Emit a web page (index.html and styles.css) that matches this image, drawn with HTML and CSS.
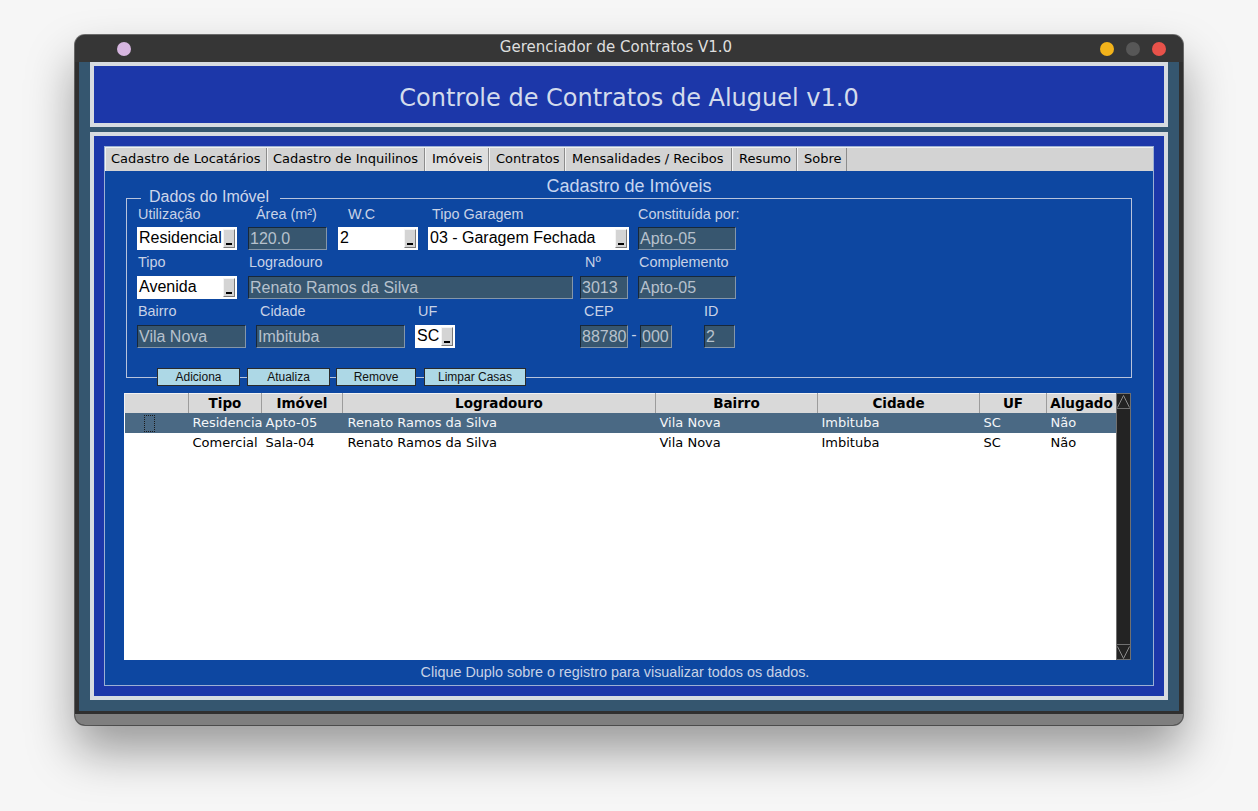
FILE: index.html
```html
<!DOCTYPE html>
<html lang="pt-BR">
<head>
<meta charset="utf-8">
<title>Gerenciador de Contratos V1.0</title>
<link rel="stylesheet" href="styles.css">
</head>
<body>
<div class="window">
  <div class="titlebar">
    <div class="tb-left"><span class="dot dot-purple"></span></div>
    <div class="tb-title">Gerenciador de Contratos V1.0</div>
    <div class="tb-right"><span class="dot dot-yellow"></span><span class="dot dot-gray"></span><span class="dot dot-red"></span></div>
  </div>
  <div class="client">
    <header class="banner">Controle de Contratos de Aluguel v1.0</header>
    <main class="panel">
      <div class="notebook">
        <nav class="tabs">
          <span class="tab t1">Cadastro de Locatários</span>
          <span class="tab t2">Cadastro de Inquilinos</span>
          <span class="tab t3 tab-active">Imóveis</span>
          <span class="tab t4">Contratos</span>
          <span class="tab t5">Mensalidades / Recibos</span>
          <span class="tab t6">Resumo</span>
          <span class="tab t7">Sobre</span>
        </nav>
        <section class="page">
          <h1 class="page-title">Cadastro de Imóveis</h1>
          <div class="fieldset">
            <span class="legend">Dados do Imóvel</span>
            <div class="row">
              <div class="field w100"><span class="lbl pl1">Utilização</span><div class="combo"><span class="cv">Residencial</span><span class="cb"><i></i></span></div></div>
              <div class="field w79 ml11"><span class="lbl pl8">Área (m²)</span><div class="entry">120.0</div></div>
              <div class="field w80 ml11"><span class="lbl pl10">W.C</span><div class="combo"><span class="cv">2</span><span class="cb"><i></i></span></div></div>
              <div class="field w201 ml10"><span class="lbl pl4">Tipo Garagem</span><div class="combo"><span class="cv">03 - Garagem Fechada</span><span class="cb"><i></i></span></div></div>
              <div class="field w98 ml9"><span class="lbl">Constituída por:</span><div class="entry">Apto-05</div></div>
            </div>
            <div class="row">
              <div class="field w100"><span class="lbl pl1">Tipo</span><div class="combo"><span class="cv">Avenida</span><span class="cb"><i></i></span></div></div>
              <div class="field w325 ml11"><span class="lbl pl1">Logradouro</span><div class="entry">Renato Ramos da Silva</div></div>
              <div class="field w48 ml7"><span class="lbl pl5">Nº</span><div class="entry">3013</div></div>
              <div class="field w98 ml10"><span class="lbl pl1">Complemento</span><div class="entry">Apto-05</div></div>
            </div>
            <div class="row">
              <div class="field w109"><span class="lbl pl1">Bairro</span><div class="entry">Vila Nova</div></div>
              <div class="field w149 ml10"><span class="lbl pl4">Cidade</span><div class="entry">Imbituba</div></div>
              <div class="field w40 ml10"><span class="lbl pl3">UF</span><div class="combo"><span class="cv">SC</span><span class="cb"><i></i></span></div></div>
              <div class="field w92 ml125"><span class="lbl pl4">CEP</span>
                <div class="cep"><div class="entry w48">88780</div><span class="dash">-</span><div class="entry w32">000</div></div>
              </div>
              <div class="field w31 ml32"><span class="lbl">ID</span><div class="entry">2</div></div>
            </div>
          </div>
          <div class="actions">
            <button class="btn b1">Adiciona</button>
            <button class="btn b2">Atualiza</button>
            <button class="btn b3">Remove</button>
            <button class="btn b4">Limpar Casas</button>
          </div>
          <div class="grid-wrap">
            <div class="grid">
              <table>
                <colgroup>
                  <col style="width:64px"><col style="width:73px"><col style="width:81px"><col style="width:313px"><col style="width:162px"><col style="width:162px"><col style="width:67px"><col style="width:70px">
                </colgroup>
                <thead>
                  <tr><th></th><th>Tipo</th><th>Imóvel</th><th>Logradouro</th><th>Bairro</th><th>Cidade</th><th>UF</th><th>Alugado</th></tr>
                </thead>
                <tbody>
                  <tr class="sel"><td class="c0"><span class="focus"></span></td><td>Residencial</td><td>Apto-05</td><td class="lg">Renato Ramos da Silva</td><td>Vila Nova</td><td>Imbituba</td><td>SC</td><td>Não</td></tr>
                  <tr><td class="c0"></td><td>Comercial</td><td>Sala-04</td><td class="lg">Renato Ramos da Silva</td><td>Vila Nova</td><td>Imbituba</td><td>SC</td><td>Não</td></tr>
                </tbody>
              </table>
            </div>
            <div class="scrollbar">
              <div class="sb-btn sb-up"><svg width="13" height="13" viewBox="0 0 13 13"><polyline points="0.5,12.5 6.5,0.5 12.5,12.5" fill="none" stroke="#8a8a8a" stroke-width="1"/></svg></div>
              <div class="sb-track"></div>
              <div class="sb-btn sb-down"><svg width="13" height="13" viewBox="0 0 13 13"><polyline points="0.5,0.5 6.5,12.5 12.5,0.5" fill="none" stroke="#8a8a8a" stroke-width="1"/></svg></div>
            </div>
          </div>
          <p class="hint">Clique Duplo sobre o registro para visualizar todos os dados.</p>
        </section>
      </div>
    </main>
  </div>
  <div class="statusbar"></div>
</div>
</body>
</html>
```

FILE: styles.css
```css
* { box-sizing: border-box; }

body {
  margin: 0;
  padding: 35px 0 0 75px;
  background: #f6f6f6;
  font-family: "Liberation Sans", Arial, sans-serif;
  min-height: 811px;
}

.window {
  width: 1108px;
  background: #2f2f2f;
  border-radius: 10px;
  overflow: hidden;
  box-shadow: 0 0 0 1px rgba(0,0,0,0.55), 0 26px 48px rgba(0,0,0,0.38);
  display: flex;
  flex-direction: column;
}

/* title bar */
.titlebar {
  height: 27px;
  background: #363636;
  display: flex;
  align-items: center;
}
.tb-left {
  width: 100px;
  padding-left: 42px;
  display: flex;
  align-items: center;
}
.tb-title {
  flex: 1;
  text-align: center;
  color: #dedede;
  font-family: "DejaVu Sans", sans-serif;
  font-size: 15px;
  line-height: 27px;
  padding-bottom: 2px;
}
.tb-right {
  width: 126px;
  padding-right: 17px;
  display: flex;
  justify-content: flex-end;
  align-items: center;
  gap: 12px;
}
.dot {
  width: 14px;
  height: 14px;
  border-radius: 50%;
  display: block;
  margin-top: 1px;
}
.dot-purple { background: #d6b6e0; }
.dot-yellow { background: #f2b31b; }
.dot-gray { background: #575757; }
.dot-red { background: #e8524a; }

/* client */
.client {
  margin: 0 4px 3px;
  background: #35566f;
  padding: 0 11px 11px;
}
.banner {
  height: 65px;
  border: 4px solid #d7dbe0;
  background: #1c37a9;
  color: #d3dbec;
  font-family: "DejaVu Sans", sans-serif;
  font-size: 24px;
  display: flex;
  align-items: center;
  justify-content: center;
  padding-top: 6px;
}
.panel {
  display: block;
  margin-top: 5px;
  border: 4px solid #d7dbe0;
  background: #1c37a9;
  padding: 10px;
}
.notebook {
  height: 540px;
  border: 1px solid #9cb0d4;
  background: #0d47a1;
  display: flex;
  flex-direction: column;
}
.tabs {
  height: 24px;
  background: #d3d3d3;
  display: flex;
  border-top: 1px solid #f0f0f0;
}
.tab {
  padding: 0 0 0 5px;
  border-right: 1px solid #8c8c8c;
  border-left: 1px solid #f2f2f2;
  font-family: "DejaVu Sans", sans-serif;
  font-size: 13px;
  line-height: 22px;
  color: #000;
  white-space: nowrap;
}
.t1 { width: 162px; }
.t2 { width: 158px; }
.t3 { width: 64px; padding-left: 6px; }
.t4 { width: 76px; padding-left: 6px; }
.t5 { width: 167px; padding-left: 6px; }
.t6 { width: 65px; padding-left: 6px; }
.t7 { width: 50px; padding-left: 6px; }
.tab-active { background: #dedede; }

.page {
  flex: 1;
  padding: 0 21px;
}
.page-title {
  margin: 5px 0 0;
  height: 20px;
  line-height: 20px;
  font-size: 18px;
  font-weight: normal;
  color: #c6d5f0;
  text-align: center;
}

/* fieldset */
.fieldset {
  margin-top: 2px;
  height: 180px;
  border: 1px solid #b7c3dc;
  position: relative;
  padding: 2px 0 0 10px;
}
.legend {
  position: absolute;
  top: -11px;
  left: 14px;
  padding: 0 11px 0 8px;
  background: #0d47a1;
  color: #cdd6ea;
  font-size: 16px;
  line-height: 18px;
}
.row { display: flex; }
.field { display: flex; flex-direction: column; }
.lbl {
  height: 26px;
  line-height: 26px;
  font-size: 14.4px;
  color: #c8d2e6;
  white-space: nowrap;
}
.row + .row .lbl { line-height: 25px; }
.entry {
  height: 23px;
  background: #37566f;
  border: 1px solid;
  border-color: #182839 #8496aa #8496aa #182839;
  color: #b6c1cd;
  font-size: 16px;
  line-height: 21px;
  padding: 0 1px;
  white-space: nowrap;
  overflow: hidden;
}
.combo {
  height: 23px;
  background: #fff;
  display: flex;
  align-items: stretch;
}
.cv {
  flex: 1;
  color: #000;
  font-size: 16px;
  line-height: 22px;
  padding-left: 2px;
  white-space: nowrap;
  overflow: hidden;
}
.cb {
  width: 12px;
  margin: 2px 2px 2px 0;
  background: #d4d4d4;
  border: 1px solid;
  border-color: #f4f4f4 #7a7a7a #7a7a7a #f4f4f4;
  display: flex;
  align-items: flex-end;
  justify-content: center;
  padding-bottom: 2px;
}
.cb i {
  display: block;
  width: 6px;
  height: 2px;
  background: #000;
}
.cep { display: flex; }
.dash {
  width: 12px;
  text-align: center;
  color: #c8d2e6;
  font-size: 16px;
  line-height: 20px;
}

.w31 { width: 31px; }
.w32 { width: 32px; }
.w40 { width: 40px; }
.w48 { width: 48px; }
.w79 { width: 79px; }
.w80 { width: 80px; }
.w92 { width: 92px; }
.w98 { width: 98px; }
.w100 { width: 100px; }
.w109 { width: 109px; }
.w149 { width: 149px; }
.w201 { width: 201px; }
.w325 { width: 325px; }
.ml7 { margin-left: 7px; }
.ml9 { margin-left: 9px; }
.ml10 { margin-left: 10px; }
.ml11 { margin-left: 11px; }
.ml32 { margin-left: 32px; }
.ml125 { margin-left: 125px; }
.pl1 { padding-left: 1px; }
.pl3 { padding-left: 3px; }
.pl4 { padding-left: 4px; }
.pl5 { padding-left: 5px; }
.pl8 { padding-left: 8px; }
.pl10 { padding-left: 10px; }

/* buttons */
.actions {
  display: flex;
  margin-top: -10px;
  padding-left: 31px;
  position: relative;
}
.btn {
  height: 18px;
  margin: 0;
  padding: 0;
  background: #add8e6;
  border: 1px solid #2a2a2a;
  font-family: "Liberation Sans", Arial, sans-serif;
  font-size: 12px;
  line-height: 16px;
  color: #111;
  text-align: center;
}
.b1 { width: 83px; }
.b2 { width: 83px; margin-left: 7px; }
.b3 { width: 80px; margin-left: 6px; }
.b4 { width: 102px; margin-left: 8px; }

/* table */
.grid-wrap {
  margin: 7px 0 0 -2px;
  width: 1007px;
  height: 267px;
  display: flex;
}
.grid {
  width: 992px;
  background: #fff;
}
table {
  width: 992px;
  border-collapse: collapse;
  table-layout: fixed;
  font-family: "DejaVu Sans", sans-serif;
}
th {
  height: 19px;
  padding: 0;
  background: #d9d9d9;
  border-top: 1px solid #f2f2f2;
  border-left: 1px solid #f2f2f2;
  border-right: 1px solid #9c9c9c;
  font-size: 13.5px;
  font-weight: bold;
  color: #000;
  text-align: center;
  line-height: 17px;
}
td {
  height: 20px;
  padding: 0 0 0 4px;
  font-size: 13px;
  line-height: 20px;
  color: #000;
  white-space: nowrap;
  overflow: hidden;
}
td.lg { padding-left: 5px; }
td.c0 { padding: 0; }
tr.sel td {
  background: #4a6984;
  color: #f4f6f8;
}
.focus {
  display: block;
  width: 11px;
  height: 17px;
  margin: 1px 0 0 19px;
  border: 1px dotted #1a1a1a;
}
.scrollbar {
  width: 15px;
  background: #232323;
  border: 1px solid #707070;
  display: flex;
  flex-direction: column;
}
.sb-btn {
  height: 15px;
  display: flex;
  align-items: center;
  justify-content: center;
}
.sb-up { border-bottom: 1px solid #707070; }
.sb-down { border-top: 1px solid #707070; }
.sb-track { flex: 1; }

.hint {
  margin: 2px 0 0;
  padding-right: 28px;
  line-height: 20px;
  font-size: 14.4px;
  color: #c8d2e6;
  text-align: center;
}

.statusbar {
  height: 11px;
  background: #7f7f7f;
}
```
